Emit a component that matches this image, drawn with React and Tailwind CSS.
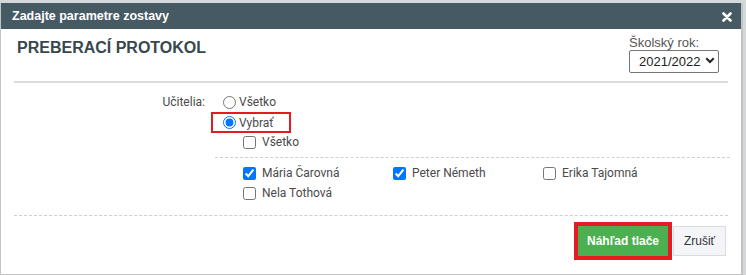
import React from 'react';

function Check({ label, checked }) {
  return (
    <label className="flex items-center gap-[6px] h-5 text-[12px] text-[#4a4a4a]">
      <input type="checkbox" defaultChecked={checked} className="w-[13px] h-[13px] m-0" />
      <span>{label}</span>
    </label>
  );
}

export default function App() {
  return (
    <div className="w-[746px] h-[275px] bg-[#d3d8db] overflow-hidden font-['Roboto',sans-serif]">
      <div className="w-[743px] h-[272px] mt-[3px] bg-white border-l border-r-2 border-b border-[#c4c4c4] flex flex-col">
        <div className="h-[26px] bg-[#465a64] flex items-center justify-between pl-[11px] pr-[9px] font-['Liberation_Sans',sans-serif]">
          <span className="text-white text-[12.5px] font-bold">Zadajte parametre zostavy</span>
          <svg width="10" height="10" viewBox="0 0 10 10" className="mt-[1px]">
            <path d="M1.5 1.5 L8.5 8.5 M8.5 1.5 L1.5 8.5" stroke="white" strokeWidth="2.6" strokeLinecap="round" />
          </svg>
        </div>

        <div className="flex justify-between pl-[16px] pr-[22px] pt-[7px] h-[52px] font-['Liberation_Sans',sans-serif]">
          <h1 className="text-[16px] leading-6 font-bold text-[#37474f]">PREBERACÍ PROTOKOL</h1>
          <div className="flex flex-col">
            <span className="text-[13px] text-[#555] leading-[13px]">Školský rok:</span>
            <div className="relative mt-[0px] w-[90px] h-[23px]">
              <select className="appearance-none w-full h-full border border-[#767676] rounded-[2px] text-[13px] text-[#222] pl-[9px] bg-white">
                <option>2021/2022</option>
              </select>
              <svg width="10" height="7" viewBox="0 0 10 7" className="absolute right-[4px] top-[8px] pointer-events-none">
                <path d="M1.3 1.3 L5 5 L8.7 1.3" stroke="#222" strokeWidth="2" fill="none" />
              </svg>
            </div>
          </div>
        </div>
        <div className="mx-[13px] h-[2px] bg-[#dcdcdc]" />

        <div className="flex mt-[9px]">
          <div className="w-[214px] pr-[10px] text-right text-[12px] text-[#4a4a4a] leading-5">Učitelia:</div>
          <div className="flex-1 pr-[11px]">
            <label className="flex items-center gap-[3px] h-5 text-[12px] text-[#4a4a4a] pl-[8px]">
              <input type="radio" name="u" className="w-[13px] h-[13px] m-0" />
              <span>Všetko</span>
            </label>
            <div className="flex items-center gap-[3px] w-[80px] h-[21px] border-2 border-[#e51b24] pl-[10px] -ml-[4px]">
              <input type="radio" name="u" defaultChecked className="w-[13px] h-[13px] m-0" />
              <span className="text-[12px] text-[#4a4a4a]">Vybrať</span>
            </div>
            <div className="pl-[28px] -mt-[1px]">
              <Check label="Všetko" />
            </div>
            <div className="border-t border-dashed border-[#cfcfcf] mt-[5px] pl-[28px] pt-[5px]">
              <div className="grid grid-cols-[150px_150px_150px]">
                <Check label="Mária Čarovná" checked />
                <Check label="Peter Németh" checked />
                <Check label="Erika Tajomná" />
                <Check label="Nela Tothová" />
              </div>
            </div>
          </div>
        </div>

        <div className="mx-[13px] mt-[12px] border-t border-dashed border-[#cfcfcf]" />
        <div className="flex justify-end items-center gap-[1px] pr-[15px] mt-[6px] font-['Liberation_Sans',sans-serif]">
          <div className="border-4 border-[#e51b24] w-[98px] h-[38px]">
            <button className="w-full h-full bg-[#4caf50] text-white text-[12px] font-bold">Náhľad tlače</button>
          </div>
          <button className="w-[53px] h-[30px] bg-[#f4f5f8] border border-[#dcdcdc] text-[#333] text-[12px]">Zrušiť</button>
        </div>
      </div>
    </div>
  );
}
